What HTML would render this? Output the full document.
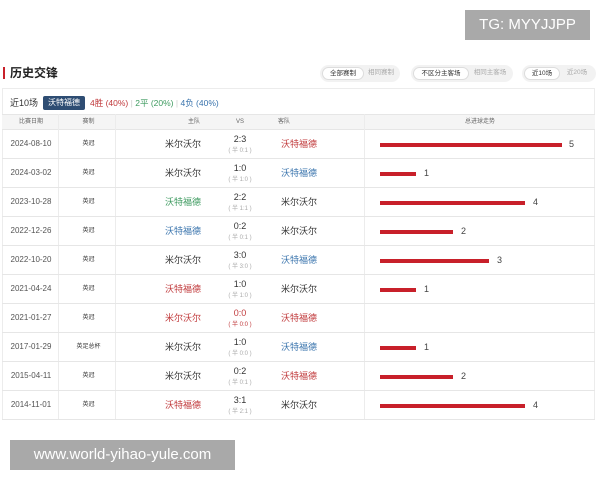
<!DOCTYPE html>
<html><head><meta charset="utf-8"><style>
*{margin:0;padding:0;box-sizing:border-box}
body{width:600px;height:480px;background:#fff;font-family:"Liberation Sans","Noto Sans CJK SC",sans-serif;position:relative;overflow:hidden;color:#333;line-height:1}
.a{position:absolute;white-space:nowrap}
.pill{position:absolute;top:65px;height:17px;border-radius:9px;background:#f2f2f2;font-size:6.5px;color:#aaa;white-space:nowrap}
.pill span{position:absolute;top:2px;height:13px;line-height:12px;text-align:center;border-radius:7px}
.pill .on{background:#fff;color:#333;border:1px solid #ddd;left:2px}
.row{position:absolute;left:2px;width:593px;height:29px;border-bottom:1px solid #e6e6e6;font-size:8px}
.c{position:absolute;text-align:center;white-space:nowrap;line-height:1}
.row .a{line-height:1}
.r{color:#c0393b}.b{color:#3a74ad}.g{color:#3d9a5f}
.bar{position:absolute;top:13px;height:4px;background:#c8202a;left:378px}
.n{position:absolute;top:10px;font-size:9px;color:#444}
.vl{position:absolute;top:114px;height:306px;width:1px;background:#ececec}
.hd span{position:absolute;top:0;line-height:14px;text-align:center}
</style></head><body>
<div class="a" style="left:3px;top:67px;width:2px;height:12px;background:#c8202a"></div>
<div class="a" style="left:10px;top:67px;font-size:12px;font-weight:bold;color:#222">历史交锋</div>
<div class="pill" style="left:320px;width:80px"><span class="on" style="width:42px">全部赛制</span><span style="left:44px;width:34px">相同赛制</span></div>
<div class="pill" style="left:411px;width:102px"><span class="on" style="width:56px">不区分主客场</span><span style="left:58px;width:42px">相同主客场</span></div>
<div class="pill" style="left:522px;width:74px"><span class="on" style="width:36px">近10场</span><span style="left:38px;width:34px">近20场</span></div>
<div class="a" style="left:2px;top:88px;width:593px;height:332px;border:1px solid #ececec"></div>
<div class="a" style="left:10px;top:99px;font-size:9px;color:#333">近10场</div>
<div class="a" style="left:43px;top:96px;width:42px;height:14px;background:#2e4d73;color:#fff;font-size:8px;line-height:14px;text-align:center;border-radius:2px">沃特福德</div>
<div class="a" style="left:90px;top:99px;font-size:8.5px"><span class="r">4胜 (40%)</span> <span style="color:#ccc">|</span> <span class="g">2平 (20%)</span> <span style="color:#ccc">|</span> <span class="b">4负 (40%)</span></div>
<div class="a hd" style="left:2px;top:114px;width:593px;height:16px;background:#f5f5f5;border-top:1px solid #e6e6e6;border-bottom:1px solid #e6e6e6;font-size:6px;color:#666">
<span style="left:0;width:58px">比赛日期</span><span style="left:58px;width:57px">赛制</span><span style="left:172px;width:40px">主队</span><span style="left:218px;width:40px">VS</span><span style="left:262px;width:40px">客队</span><span style="left:363px;width:230px">总进球走势</span></div>
<div class="vl" style="left:58px"></div><div class="vl" style="left:115px"></div><div class="vl" style="left:364px"></div>
<div class="row" style="top:130px"><span class="c" style="left:0;width:58px;top:10px;color:#555">2024-08-10</span><span class="c" style="left:58px;width:57px;top:11px;font-size:6px">英冠</span><span class="a" style="left:163px;top:10px;font-size:9px">米尔沃尔</span><span class="c" style="left:213px;width:50px;top:5px;font-size:9px">2:3</span><span class="c" style="left:213px;width:50px;top:18px;font-size:6px;color:#aaa">( 半 0:1 )</span><span class="a r" style="left:279px;top:10px;font-size:9px">沃特福德</span><div class="bar" style="width:182px"></div><span class="n" style="left:567px">5</span></div>
<div class="row" style="top:159px"><span class="c" style="left:0;width:58px;top:10px;color:#555">2024-03-02</span><span class="c" style="left:58px;width:57px;top:11px;font-size:6px">英冠</span><span class="a" style="left:163px;top:10px;font-size:9px">米尔沃尔</span><span class="c" style="left:213px;width:50px;top:5px;font-size:9px">1:0</span><span class="c" style="left:213px;width:50px;top:18px;font-size:6px;color:#aaa">( 半 1:0 )</span><span class="a b" style="left:279px;top:10px;font-size:9px">沃特福德</span><div class="bar" style="width:36px"></div><span class="n" style="left:422px">1</span></div>
<div class="row" style="top:188px"><span class="c" style="left:0;width:58px;top:10px;color:#555">2023-10-28</span><span class="c" style="left:58px;width:57px;top:11px;font-size:6px">英冠</span><span class="a g" style="left:163px;top:10px;font-size:9px">沃特福德</span><span class="c" style="left:213px;width:50px;top:5px;font-size:9px">2:2</span><span class="c" style="left:213px;width:50px;top:18px;font-size:6px;color:#aaa">( 半 1:1 )</span><span class="a" style="left:279px;top:10px;font-size:9px">米尔沃尔</span><div class="bar" style="width:145px"></div><span class="n" style="left:531px">4</span></div>
<div class="row" style="top:217px"><span class="c" style="left:0;width:58px;top:10px;color:#555">2022-12-26</span><span class="c" style="left:58px;width:57px;top:11px;font-size:6px">英冠</span><span class="a b" style="left:163px;top:10px;font-size:9px">沃特福德</span><span class="c" style="left:213px;width:50px;top:5px;font-size:9px">0:2</span><span class="c" style="left:213px;width:50px;top:18px;font-size:6px;color:#aaa">( 半 0:1 )</span><span class="a" style="left:279px;top:10px;font-size:9px">米尔沃尔</span><div class="bar" style="width:73px"></div><span class="n" style="left:459px">2</span></div>
<div class="row" style="top:246px"><span class="c" style="left:0;width:58px;top:10px;color:#555">2022-10-20</span><span class="c" style="left:58px;width:57px;top:11px;font-size:6px">英冠</span><span class="a" style="left:163px;top:10px;font-size:9px">米尔沃尔</span><span class="c" style="left:213px;width:50px;top:5px;font-size:9px">3:0</span><span class="c" style="left:213px;width:50px;top:18px;font-size:6px;color:#aaa">( 半 3:0 )</span><span class="a b" style="left:279px;top:10px;font-size:9px">沃特福德</span><div class="bar" style="width:109px"></div><span class="n" style="left:495px">3</span></div>
<div class="row" style="top:275px"><span class="c" style="left:0;width:58px;top:10px;color:#555">2021-04-24</span><span class="c" style="left:58px;width:57px;top:11px;font-size:6px">英冠</span><span class="a r" style="left:163px;top:10px;font-size:9px">沃特福德</span><span class="c" style="left:213px;width:50px;top:5px;font-size:9px">1:0</span><span class="c" style="left:213px;width:50px;top:18px;font-size:6px;color:#aaa">( 半 1:0 )</span><span class="a" style="left:279px;top:10px;font-size:9px">米尔沃尔</span><div class="bar" style="width:36px"></div><span class="n" style="left:422px">1</span></div>
<div class="row" style="top:304px"><span class="c" style="left:0;width:58px;top:10px;color:#555">2021-01-27</span><span class="c" style="left:58px;width:57px;top:11px;font-size:6px">英冠</span><span class="a r" style="left:163px;top:10px;font-size:9px">米尔沃尔</span><span class="c r" style="left:213px;width:50px;top:5px;font-size:9px">0:0</span><span class="c r" style="left:213px;width:50px;top:18px;font-size:6px">( 半 0:0 )</span><span class="a r" style="left:279px;top:10px;font-size:9px">沃特福德</span></div>
<div class="row" style="top:333px"><span class="c" style="left:0;width:58px;top:10px;color:#555">2017-01-29</span><span class="c" style="left:58px;width:57px;top:11px;font-size:6px">英足总杯</span><span class="a" style="left:163px;top:10px;font-size:9px">米尔沃尔</span><span class="c" style="left:213px;width:50px;top:5px;font-size:9px">1:0</span><span class="c" style="left:213px;width:50px;top:18px;font-size:6px;color:#aaa">( 半 0:0 )</span><span class="a b" style="left:279px;top:10px;font-size:9px">沃特福德</span><div class="bar" style="width:36px"></div><span class="n" style="left:422px">1</span></div>
<div class="row" style="top:362px"><span class="c" style="left:0;width:58px;top:10px;color:#555">2015-04-11</span><span class="c" style="left:58px;width:57px;top:11px;font-size:6px">英冠</span><span class="a" style="left:163px;top:10px;font-size:9px">米尔沃尔</span><span class="c" style="left:213px;width:50px;top:5px;font-size:9px">0:2</span><span class="c" style="left:213px;width:50px;top:18px;font-size:6px;color:#aaa">( 半 0:1 )</span><span class="a r" style="left:279px;top:10px;font-size:9px">沃特福德</span><div class="bar" style="width:73px"></div><span class="n" style="left:459px">2</span></div>
<div class="row" style="top:391px"><span class="c" style="left:0;width:58px;top:10px;color:#555">2014-11-01</span><span class="c" style="left:58px;width:57px;top:11px;font-size:6px">英冠</span><span class="a r" style="left:163px;top:10px;font-size:9px">沃特福德</span><span class="c" style="left:213px;width:50px;top:5px;font-size:9px">3:1</span><span class="c" style="left:213px;width:50px;top:18px;font-size:6px;color:#aaa">( 半 2:1 )</span><span class="a" style="left:279px;top:10px;font-size:9px">米尔沃尔</span><div class="bar" style="width:145px"></div><span class="n" style="left:531px">4</span></div>
<div class="a" style="left:465px;top:10px;width:125px;height:30px;background:#a9a9a9;color:#fff;font-size:15px;line-height:30px;text-align:center">TG: MYYJJPP</div>
<div class="a" style="left:10px;top:440px;width:225px;height:30px;background:#a9a9a9;color:#fff;font-size:15px;line-height:30px;text-align:center">www.world-yihao-yule.com</div>
</body></html>
